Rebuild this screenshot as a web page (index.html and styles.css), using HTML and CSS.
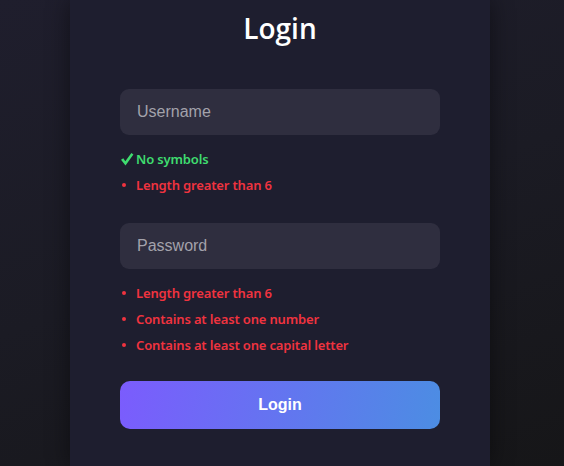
FILE: index.html
```html
<!DOCTYPE html>
<html lang="en">
<head>
<meta charset="utf-8">
<title>Login</title>
<link rel="stylesheet" href="styles.css">
</head>
<body>
<div class="page">
  <div class="card">
    <h1 class="title">Login</h1>
    <form class="form">
      <input class="field" type="text" placeholder="Username">
      <ul class="rules rules-user">
        <li class="rule ok"><svg class="check" viewBox="0 0 14 14" width="14" height="14"><path d="M1 7.8 L3.3 6.2 L5.3 9.3 L11.4 1 L13.4 2.4 L5.5 13.4 Z" fill="#3fdc6f"/></svg>No symbols</li>
        <li class="rule bad">Length greater than 6</li>
      </ul>
      <input class="field" type="password" placeholder="Password">
      <ul class="rules rules-pass">
        <li class="rule bad">Length greater than 6</li>
        <li class="rule bad">Contains at least one number</li>
        <li class="rule bad">Contains at least one capital letter</li>
      </ul>
      <button class="btn" type="button">Login</button>
    </form>
  </div>
</div>
</body>
</html>
```

FILE: styles.css
```css
* { box-sizing: border-box; }
html, body { margin: 0; padding: 0; height: 100%; }
body {
  background: linear-gradient(160deg, #1f1e2d 0%, #1b1b24 50%, #161618 100%);
  overflow: hidden;
}
.page {
  height: 466px;
  display: flex;
  justify-content: center;
  padding-right: 4px;
}
.card {
  width: 420px;
  height: 100%;
  background: #1e1e2f;
  box-shadow: 0 0 22px rgba(0, 0, 0, 0.45);
  padding: 11px 50px 0;
}
.title {
  margin: 0;
  font-family: "Open Sans", "Noto Sans", sans-serif;
  font-weight: 600;
  font-size: 28px;
  line-height: 34px;
  color: #ffffff;
  text-align: center;
}
.form {
  margin-top: 44px;
  display: flex;
  flex-direction: column;
}
.field {
  display: block;
  width: 100%;
  height: 46px;
  border: none;
  outline: none;
  border-radius: 9px;
  background: #2f2e3f;
  padding: 0 17px;
  font-family: "Liberation Sans", Arial, sans-serif;
  font-size: 16px;
  color: #e0e0e6;
}
.field::placeholder { color: #a3a2ab; }
.rules {
  list-style: none;
  margin: 11px 0 25px;
  padding: 0;
}
.rules-pass { margin-bottom: 23px; }
.rule {
  position: relative;
  display: flex;
  align-items: center;
  height: 26px;
  padding-left: 16px;
  font-family: "Noto Sans", sans-serif;
  font-weight: 600;
  font-size: 13px;
  letter-spacing: -0.15px;
}
.rule.ok { color: #3fdc6f; padding-left: 0; }
.rule.bad { color: #f0333f; }
.rule.bad::before {
  content: "";
  position: absolute;
  left: 2px;
  top: 11px;
  width: 4px;
  height: 4px;
  border-radius: 50%;
  background: #f0333f;
}
.check { margin-right: 2px; flex: none; }
.btn {
  width: 100%;
  height: 48px;
  border: none;
  border-radius: 10px;
  background: linear-gradient(100deg, #7b5cfd 0%, #4c8de3 100%);
  color: #ffffff;
  font-family: "Liberation Sans", Arial, sans-serif;
  font-weight: 700;
  font-size: 16px;
  cursor: pointer;
}
```
